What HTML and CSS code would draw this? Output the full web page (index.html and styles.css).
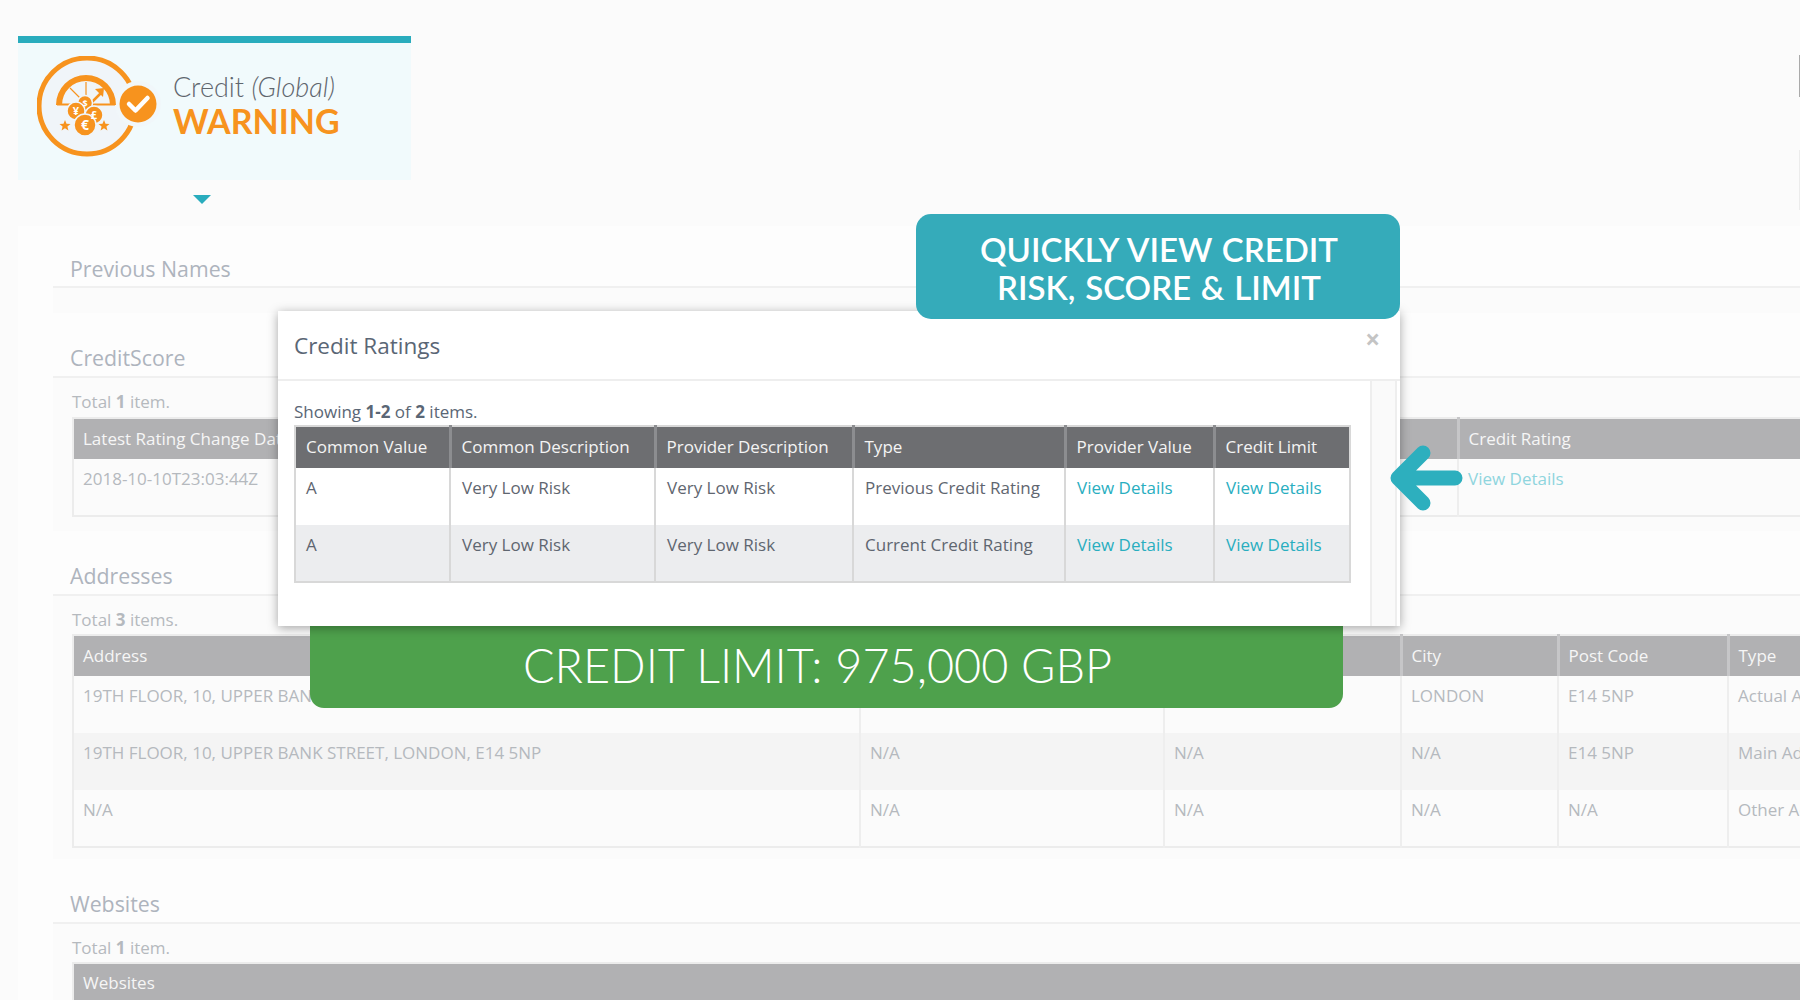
FILE: index.html
```html
<!DOCTYPE html>
<html lang="en">
<head>
  <meta charset="UTF-8">
  <meta name="viewport" content="width=device-width, initial-scale=1.0">
  <title>Credit Ratings</title>
  <link rel="stylesheet" href="styles.css">
</head>
<body>

  <div class="page">
    <span class="edge-mark"></span>
    <span class="edge-mark edge-mark-faint"></span>

    <!-- Status card -->
    <div class="status-card">
      <svg class="status-icon" viewBox="0 0 125 105" width="125" height="105">
        <circle cx="50" cy="50" r="48" fill="#f0f5f9" stroke="#f7931e" stroke-width="5"/>
        <circle cx="101" cy="48" r="23" fill="#f1f7fa"/>
        <circle cx="101" cy="48" r="18.5" fill="#f7931e"/>
        <path d="M92 48l6.5 6.5L110.500 42" fill="none" stroke="#fff" stroke-width="4.500" stroke-linecap="round" stroke-linejoin="round"/>
        <path d="M19 49a30 30 0 0 1 60 0h-6a24 24 0 0 0-48 0z" fill="#f7931e"/>
        <path d="M20 48.500h58" stroke="#f7931e" stroke-width="2"/>
        <path d="M49 26v23M33 32l15 15" stroke="#f7931e" stroke-width="1.200" fill="none"/>
        <path d="M55 46l9-9" stroke="#f7931e" stroke-width="2.500" fill="none"/>
        <path d="M67 32l-1 9-8-8z" fill="#f7931e"/>
        <circle cx="48" cy="47" r="7.500" fill="#f7931e" stroke="#f0f5f9" stroke-width="1.500"/>
        <circle cx="39" cy="55" r="9" fill="#f7931e" stroke="#f0f5f9" stroke-width="1.500"/>
        <circle cx="57" cy="59" r="9" fill="#f7931e" stroke="#f0f5f9" stroke-width="1.500"/>
        <circle cx="48" cy="69" r="11" fill="#f7931e" stroke="#f0f5f9" stroke-width="1.500"/>
        <text class="coin coin-sm" x="48" y="50.500">$</text>
        <text class="coin" x="39" y="59">¥</text>
        <text class="coin" x="57" y="63">£</text>
        <text class="coin coin-lg" x="48" y="74">€</text>
        <path class="star" d="M28 64l1.500 3.800 4 .2-3.100 2.500 1 3.900-3.400-2.200-3.400 2.200 1-3.900-3.100-2.500 4-.2z"/>
        <path class="star" d="M67 64l1.500 3.800 4 .2-3.100 2.500 1 3.900-3.400-2.200-3.400 2.200 1-3.900-3.100-2.500 4-.2z"/>
      </svg>
      <div class="status-text">
        <div class="status-name">Credit <em>(Global)</em></div>
        <div class="status-value">WARNING</div>
      </div>
    </div>
    <div class="card-caret"></div>

    <!-- Page behind the dialog -->
    <div class="content">
      <section class="block block-names">
        <h2>Previous Names</h2>
        <div class="well well-empty"></div>
      </section>

      <section class="block">
        <h2>CreditScore</h2>
        <div class="well well-score">
          <p class="summary">Total <b>1</b> item.</p>
          <table class="grid grid-score">
            <colgroup><col class="col-date"><col></colgroup>
            <thead>
              <tr><th>Latest Rating Change Date</th><th>Credit Rating</th></tr>
            </thead>
            <tbody>
              <tr><td>2018-10-10T23:03:44Z</td><td><a href="#">View Details</a></td></tr>
            </tbody>
          </table>
        </div>
      </section>

      <section class="block">
        <h2>Addresses</h2>
        <div class="well well-address">
          <p class="summary">Total <b>3</b> items.</p>
          <table class="grid grid-address">
            <colgroup>
              <col class="col-address"><col class="col-a"><col class="col-b"><col class="col-city"><col class="col-post"><col>
            </colgroup>
            <thead>
              <tr><th>Address</th><th></th><th></th><th>City</th><th>Post Code</th><th>Type</th></tr>
            </thead>
            <tbody>
              <tr><td>19TH FLOOR, 10, UPPER BANK STREET, LONDON, E14 5NP</td><td></td><td></td><td>LONDON</td><td>E14 5NP</td><td>Actual Address</td></tr>
              <tr><td>19TH FLOOR, 10, UPPER BANK STREET, LONDON, E14 5NP</td><td>N/A</td><td>N/A</td><td>N/A</td><td>E14 5NP</td><td>Main Address</td></tr>
              <tr><td>N/A</td><td>N/A</td><td>N/A</td><td>N/A</td><td>N/A</td><td>Other Address</td></tr>
            </tbody>
          </table>
        </div>
      </section>

      <section class="block">
        <h2>Websites</h2>
        <div class="well">
          <p class="summary">Total <b>1</b> item.</p>
          <table class="grid grid-web">
            <thead>
              <tr><th>Websites</th></tr>
            </thead>
          </table>
        </div>
      </section>
    </div>

    <!-- Banner sits under the dialog -->
    <div class="limit-banner">CREDIT LIMIT: 975,000 GBP</div>

    <!-- Dialog -->
    <div class="modal">
      <div class="modal-header">
        <h3>Credit Ratings</h3>
        <span class="modal-close">×</span>
      </div>
      <div class="modal-body">
        <div class="modal-main">
          <p class="showing">Showing <b>1-2</b> of <b>2</b> items.</p>
          <table class="ratings">
            <colgroup>
              <col class="r1"><col class="r2"><col class="r3"><col class="r4"><col class="r5"><col>
            </colgroup>
            <thead>
              <tr>
                <th>Common Value</th>
                <th>Common Description</th>
                <th>Provider Description</th>
                <th>Type</th>
                <th>Provider Value</th>
                <th>Credit Limit</th>
              </tr>
            </thead>
            <tbody>
              <tr>
                <td>A</td>
                <td>Very Low Risk</td>
                <td>Very Low Risk</td>
                <td>Previous Credit Rating</td>
                <td><a href="#">View Details</a></td>
                <td><a href="#">View Details</a></td>
              </tr>
              <tr>
                <td>A</td>
                <td>Very Low Risk</td>
                <td>Very Low Risk</td>
                <td>Current Credit Rating</td>
                <td><a href="#">View Details</a></td>
                <td><a href="#">View Details</a></td>
              </tr>
            </tbody>
          </table>
        </div>
        <div class="modal-track"></div>
      </div>
    </div>

    <div class="callout">QUICKLY VIEW CREDIT<br>RISK, SCORE &amp; LIMIT</div>

    <svg class="arrow" viewBox="0 0 74 66" width="74" height="66">
      <path d="M66 33H10M34 8L9 33l25 25" fill="none" stroke="#2dafbe" stroke-width="15" stroke-linecap="round" stroke-linejoin="round"/>
    </svg>
  </div>

</body>
</html>
```

FILE: styles.css
```css
* {
  box-sizing: border-box;
}

body {
  margin: 0;
  padding: 0;
  background-color: #fbfbfb;
  font-family: "Open Sans", sans-serif;
  font-size: 17px;
  color: #b5b9be;
}

.page {
  position: relative;
  width: 1800px;
  height: 1000px;
  padding-top: 36px;
  overflow: hidden;
}

.edge-mark {
  position: absolute;
  top: 55px;
  right: 0;
  width: 1px;
  height: 42px;
  background-color: #aaa;
}

.edge-mark-faint {
  top: 150px;
  height: 60px;
  background-color: #ececec;
}

/* Status card */
.status-card {
  display: flex;
  align-items: flex-start;
  width: 393px;
  height: 144px;
  margin-left: 18px;
  padding: 13px 0 0 19px;
  background-color: #f1fafc;
  border-top: 7px solid #29acbd;
}

.status-icon {
  flex: none;
}

.coin {
  font-family: "Open Sans", sans-serif;
  font-size: 11px;
  font-weight: 700;
  fill: #fff;
  text-anchor: middle;
}

.coin-sm {
  font-size: 9px;
}

.coin-lg {
  font-size: 14px;
}

.star {
  fill: #f7931e;
}

.status-text {
  margin: 15px 0 0 11px;
}

.status-name {
  font-family: Lato, sans-serif;
  font-size: 27px;
  font-weight: 300;
  line-height: 32px;
  color: #5f666e;
}

.status-value {
  font-family: Lato, sans-serif;
  font-size: 34px;
  font-weight: 700;
  line-height: 35px;
  color: #f7931e;
}

.card-caret {
  width: 0;
  height: 0;
  margin: 15px 0 0 193px;
  border-left: 9px solid transparent;
  border-right: 9px solid transparent;
  border-top: 9px solid #29acbd;
}

/* Sections */
.content {
  margin: 22px 0 0 18px;
  padding-left: 35px;
  background-color: #fdfdfd;
}

.block h2 {
  height: 65px;
  margin: 0;
  padding: 28px 0 0 17px;
  font-size: 21.300px;
  font-weight: 400;
  line-height: 34px;
  color: #aeb4bd;
  border-bottom: 2px solid #f0f0f0;
}

.block-names h2 {
  height: 62px;
  padding-top: 26px;
}

.well {
  padding: 0 0 13px 19px;
  background-color: #fbfbfb;
}

.well-empty {
  height: 25px;
  padding: 0;
}

.well-score {
  padding-bottom: 14px;
}

.well-address {
  padding-bottom: 11px;
}

.summary {
  height: 38px;
  margin: 0;
  padding-top: 13px;
  line-height: 22px;
}

.well-score .summary {
  height: 39px;
}

.grid {
  table-layout: fixed;
  border-collapse: collapse;
  border: 2px solid #ececec;
  border-right: 0;
}

.grid-score,
.grid-address,
.grid-web {
  width: 1800px;
}

.col-date { width: 1385px; }
.col-address { width: 787px; }
.col-a { width: 304px; }
.col-b { width: 237px; }
.col-city { width: 157px; }
.col-post { width: 170px; }

.grid th {
  height: 41px;
  padding: 0 9px 2px;
  text-align: left;
  font-weight: 400;
  color: #f6f6f6;
  background-color: #b1b1b3;
  border-left: 3px solid #c6c6c8;
}

.grid th:first-child,
.grid td:first-child {
  border-left: 0;
}

.grid td {
  height: 57px;
  padding: 8px 9px;
  vertical-align: top;
  line-height: 24px;
  border-left: 2px solid #eeeeee;
}

.grid tbody tr:nth-child(even) {
  background-color: #f4f4f4;
}

.grid a {
  color: #8fd5de;
  text-decoration: none;
}

/* Overlays */
.limit-banner {
  position: absolute;
  top: 626px;
  left: 310px;
  width: 1033px;
  height: 82px;
  padding: 7px 18px 0 0;
  text-align: center;
  font-family: Lato, sans-serif;
  font-size: 46.800px;
  font-weight: 300;
  line-height: 64px;
  color: #fff;
  background-color: #4ea14c;
  border-radius: 0 0 14px 14px;
}

.modal {
  position: absolute;
  top: 311px;
  left: 278px;
  width: 1122px;
  height: 315px;
  display: flex;
  flex-direction: column;
  background-color: #fff;
  box-shadow: 0 2px 10px rgba(0, 0, 0, 0.35);
}

.modal-header {
  display: flex;
  justify-content: space-between;
  flex: none;
  height: 70px;
  padding: 0 20px 0 16px;
  border-bottom: 2px solid #eeeeee;
}

.modal-header h3 {
  margin: 18px 0 0;
  font-size: 22.500px;
  font-weight: 400;
  line-height: 34px;
  color: #5a6675;
}

.modal-close {
  margin-top: 12px;
  font-size: 26px;
  font-weight: 700;
  line-height: 32px;
  color: #c4c4c4;
}

.modal-body {
  display: flex;
  flex: 1;
  padding-left: 16px;
}

.modal-main {
  width: 1076px;
}

.showing {
  height: 44px;
  margin: 0;
  padding-top: 19px;
  line-height: 24px;
  color: #5a6675;
}

.ratings {
  width: 1057px;
  table-layout: fixed;
  border-collapse: collapse;
  border: 2px solid #d8d8d8;
}

.r1 { width: 155px; }
.r2 { width: 205px; }
.r3 { width: 198px; }
.r4 { width: 212px; }
.r5 { width: 149px; }

.ratings th {
  height: 42px;
  padding: 0 10px 2px;
  text-align: left;
  font-weight: 400;
  color: #f4f4f4;
  background-color: #6d6e71;
  border-left: 3px solid #8c8d90;
}

.ratings th:first-child,
.ratings td:first-child {
  border-left: 0;
}

.ratings td {
  height: 57px;
  padding: 8px 10px 8px 11px;
  vertical-align: top;
  line-height: 24px;
  color: #5f6670;
  border-left: 2px solid #d8d8d8;
}

.ratings td:first-child {
  padding-left: 10px;
}

.ratings tbody tr:nth-child(even) {
  background-color: #ecedef;
}

.ratings a {
  color: #29aebf;
  text-decoration: none;
}

.modal-track {
  width: 27px;
  background-color: #fafafa;
  border-left: 2px solid #eeeeee;
  border-right: 2px solid #eeeeee;
}

.callout {
  position: absolute;
  top: 214px;
  left: 916px;
  width: 484px;
  height: 105px;
  padding: 16px 0 0 2px;
  text-align: center;
  font-family: Lato, sans-serif;
  font-size: 33px;
  font-weight: 600;
  line-height: 38px;
  word-spacing: 1.500px;
  color: #fff;
  background-color: #35abba;
  border-radius: 15px;
}

.arrow {
  position: absolute;
  top: 445px;
  left: 1389px;
}
```
